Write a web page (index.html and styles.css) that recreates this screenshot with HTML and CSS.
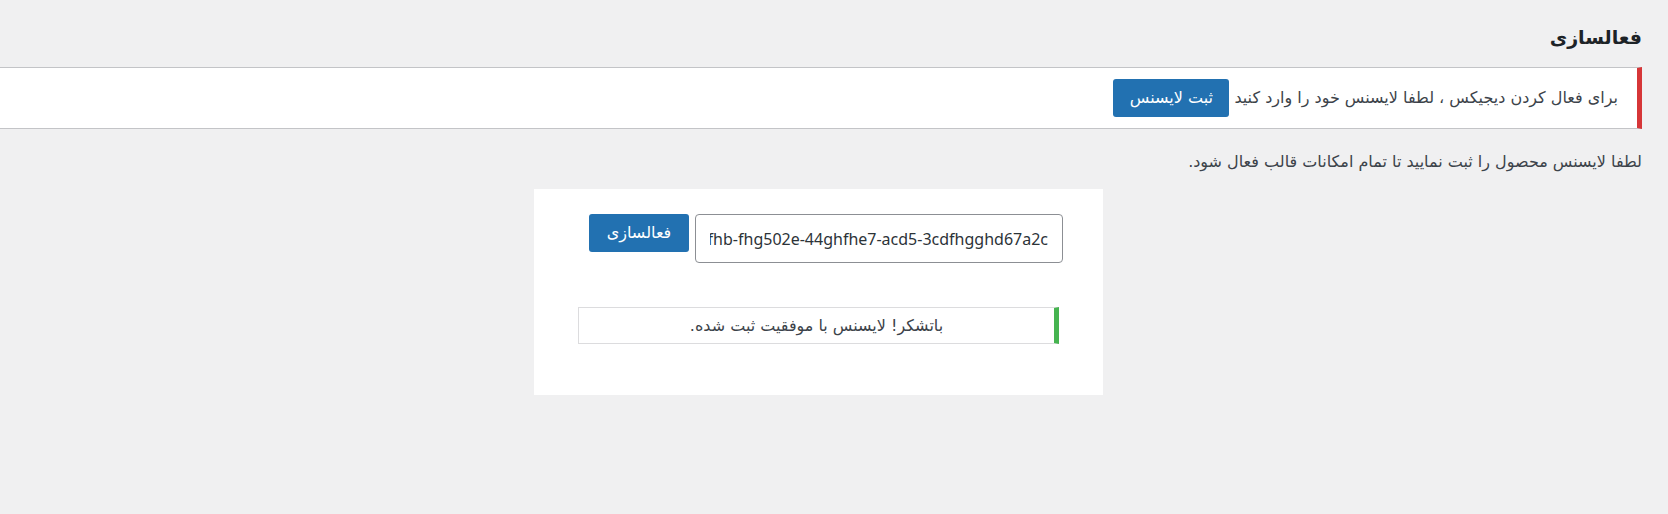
FILE: index.html
```html
<!DOCTYPE html>
<html lang="fa" dir="rtl">
<head>
  <meta charset="UTF-8">
  <title>فعالسازی</title>
  <meta name="viewport" content="width=device-width, initial-scale=1">
  <link rel="stylesheet" href="styles.css">
</head>
<body>

<div class="wrap">
  <h1>فعالسازی</h1>

  <div class="notice notice-error">
    <p>برای فعال کردن دیجیکس ، لطفا لایسنس خود را وارد کنید</p>
    <a href="#" class="button">ثبت لایسنس</a>
  </div>

  <p class="intro">لطفا لایسنس محصول را ثبت نمایید تا تمام امکانات قالب فعال شود.</p>

  <div class="license-box">
    <form class="license-row" onsubmit="return false">
      <input type="text" id="licenseKey" value="4e7fhb-fhg502e-44ghfhe7-acd5-3cdfhgghd67a2c">
      <button type="submit" class="button">فعالسازی</button>
    </form>

    <div class="license-msg">
      <p>باتشکر! لایسنس با موفقیت ثبت شده.</p>
    </div>
  </div>
</div>

</body>
</html>
```

FILE: styles.css
```css
* { box-sizing: border-box; margin: 0; padding: 0; }
body {
  background: #f0f0f1;
  color: #3c434a;
  font-family: "Noto Sans", "DejaVu Sans", sans-serif;
  font-size: 16px;
  line-height: 1.5;
}

.wrap {
  padding-right: 26px;
}

h1 {
  font-family: "DejaVu Sans", sans-serif;
  font-size: 19px;
  font-weight: 700;
  color: #1d2327;
  line-height: 30px;
  padding-top: 22px;
  margin-bottom: 15px;
}

.button {
  display: inline-block;
  background: #2271b1;
  color: #fff;
  border: none;
  border-radius: 3px;
  font-family: "DejaVu Sans", sans-serif;
  font-size: 16px;
  height: 38px;
  line-height: 38px;
  text-decoration: none;
  text-align: center;
  cursor: pointer;
}

.notice {
  display: flex;
  align-items: center;
  gap: 5px;
  background: #fff;
  border-top: 1px solid #c3c4c7;
  border-bottom: 1px solid #c3c4c7;
  border-right: 5px solid #d63638;
  padding: 11px 19px 11px 0;
}
.notice p {
  font-family: "DejaVu Sans", sans-serif;
  font-size: 16px;
}
.notice .button {
  width: 116px;
}

.intro {
  font-family: "DejaVu Sans", sans-serif;
  margin-top: 22px;
  line-height: 21px;
}

.license-box {
  width: 569px;
  margin: 17px 0 0 0;
  margin-right: 539px;
  background: #fff;
  padding: 25px 40px 51px;
}

.license-row {
  display: flex;
  align-items: flex-start;
  gap: 6px;
}
.license-row input {
  width: 368px;
  height: 49px;
  border: 1px solid #8c8f94;
  border-radius: 4px;
  padding: 0 14px;
  font-family: "Noto Sans", sans-serif;
  font-size: 16px;
  color: #2c3338;
  background: #fff;
}
.license-row .button {
  width: 100px;
}

.license-msg {
  margin: 44px 4px 0;
  border: 1px solid #dcdcde;
  border-right: 5px solid #46b450;
  padding: 7px 12px;
  text-align: center;
}
.license-msg p {
  font-family: "DejaVu Sans", sans-serif;
  font-size: 16px;
  line-height: 21px;
}
```
